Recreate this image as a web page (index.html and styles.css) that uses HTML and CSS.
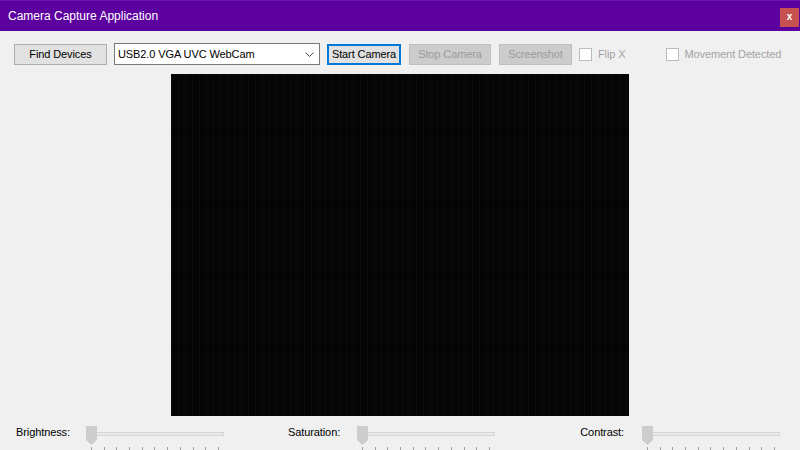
FILE: index.html
```html
<!DOCTYPE html>
<html>
<head>
<meta charset="utf-8">
<link rel="stylesheet" href="styles.css">
</head>
<body>
<div class="window">
  <div class="titlebar">
    <span class="title">Camera Capture Application</span>
    <span class="close">x</span>
  </div>
  <div class="toolbar">
    <button class="btn btn-find">Find Devices</button>
    <div class="combo">
      <span>USB2.0 VGA UVC WebCam</span>
      <svg class="chev" width="9" height="5" viewBox="0 0 9 5"><polyline points="0.5,0.5 4.5,4.5 8.5,0.5" fill="none" stroke="#444" stroke-width="1"/></svg>
    </div>
    <button class="btn btn-start">Start Camera</button>
    <button class="btn btn-dis btn-stop">Stop Camera</button>
    <button class="btn btn-dis btn-shot">Screenshot</button>
    <label class="check check-flip"><span class="box"></span>Flip X</label>
    <label class="check check-move"><span class="box"></span>Movement Detected</label>
  </div>
  <div class="video"></div>
  <div class="sliders">
    <span class="lbl lbl-b">Brightness:</span>
    <div class="slider">
      <svg class="thumb" width="11" height="19" viewBox="0 0 11 19"><polygon points="0,0 11,0 11,14 5.5,19 0,14" fill="#cdcdcd"/></svg>
      <div class="track"></div>
      <div class="ticks"><i></i><i></i><i></i><i></i><i></i><i></i><i></i><i></i><i></i><i></i><i></i></div>
    </div>
    <span class="lbl lbl-s">Saturation:</span>
    <div class="slider">
      <svg class="thumb" width="11" height="19" viewBox="0 0 11 19"><polygon points="0,0 11,0 11,14 5.5,19 0,14" fill="#cdcdcd"/></svg>
      <div class="track"></div>
      <div class="ticks"><i></i><i></i><i></i><i></i><i></i><i></i><i></i><i></i><i></i><i></i><i></i></div>
    </div>
    <span class="lbl lbl-c">Contrast:</span>
    <div class="slider">
      <svg class="thumb" width="11" height="19" viewBox="0 0 11 19"><polygon points="0,0 11,0 11,14 5.5,19 0,14" fill="#cdcdcd"/></svg>
      <div class="track"></div>
      <div class="ticks"><i></i><i></i><i></i><i></i><i></i><i></i><i></i><i></i><i></i><i></i><i></i></div>
    </div>
  </div>
</div>
</body>
</html>
```
FILE: styles.css
```css
html, body {
  margin: 0;
  padding: 0;
  width: 800px;
  height: 450px;
  overflow: hidden;
  background: #f0f0f0;
  font-family: "Liberation Sans", Arial, sans-serif;
  font-size: 11px;
  letter-spacing: -0.1px;
  color: #000;
}
.window {
  display: flex;
  flex-direction: column;
  width: 800px;
  height: 450px;
}
.titlebar {
  height: 31px;
  box-sizing: border-box;
  background: #5d00a0;
  border-top: 1px solid #6a14a8;
  display: flex;
  align-items: flex-start;
  padding-left: 8px;
  padding-right: 1px;
}
.title {
  color: #fff;
  font-size: 12px;
  letter-spacing: 0;
  line-height: 14px;
  margin-top: 8px;
}
.close {
  margin-left: auto;
  margin-top: 7px;
  width: 19px;
  height: 19px;
  background: #c75050;
  color: #fff;
  font-weight: bold;
  font-size: 10px;
  line-height: 18px;
  text-align: center;
}
.toolbar {
  display: flex;
  align-items: center;
  height: 22px;
  margin-top: 12px;
  padding-left: 14px;
}
.btn {
  box-sizing: border-box;
  height: 21px;
  margin: 0;
  padding: 0;
  font-family: "Liberation Sans", Arial, sans-serif;
  font-size: 11px;
  letter-spacing: -0.1px;
  background: #e1e1e1;
  border: 1px solid #adadad;
  color: #000;
}
.btn-find { width: 93px; }
.combo {
  box-sizing: border-box;
  width: 206px;
  height: 22px;
  margin-left: 7px;
  background: #fff;
  border: 1px solid #7a7a7a;
  display: flex;
  align-items: center;
  padding-left: 3px;
  padding-right: 5px;
}
.chev { margin-left: auto; }
.btn-start {
  width: 74px;
  margin-left: 7px;
  border: 2px solid #0078d7;
}
.btn-dis {
  background: #cccccc;
  border-color: #bfbfbf;
  color: #9b9b9b;
}
.btn-stop { width: 82px; margin-left: 8px; }
.btn-shot { width: 73px; margin-left: 8px; }
.check {
  display: flex;
  align-items: center;
  color: #a3a3a3;
}
.box {
  box-sizing: border-box;
  width: 13px;
  height: 13px;
  background: #fff;
  border: 1px solid #bcbcbc;
  margin-right: 6px;
}
.check-flip { margin-left: 7px; }
.check-move { margin-left: 40px; }
.video {
  width: 458px;
  height: 342px;
  margin-top: 9px;
  margin-left: 171px;
  background-color: #040404;
  background-image:
    repeating-linear-gradient(90deg, rgba(16,16,16,0.5) 0 1px, transparent 1px 7px),
    repeating-linear-gradient(0deg, rgba(14,14,14,0.4) 0 1px, transparent 1px 9px);
}
.sliders {
  display: flex;
  align-items: flex-start;
  margin-top: 8px;
  height: 26px;
}
.lbl {
  line-height: 16px;
  box-sizing: border-box;
}
.lbl-b { width: 86px; padding-left: 16px; }
.lbl-s { width: 129px; padding-left: 60px; }
.lbl-c { width: 143px; text-align: right; padding-right: 18px; }
.slider {
  position: relative;
  width: 142px;
  height: 26px;
}
.thumb {
  position: absolute;
  left: 0;
  top: 2px;
}
.track {
  box-sizing: border-box;
  width: 138px;
  height: 4px;
  margin-top: 8px;
  background: #e7eaea;
  border: 1px solid #d6d6d6;
}
.ticks {
  display: flex;
  justify-content: space-between;
  width: 128px;
  margin-left: 5px;
  margin-top: 11px;
  height: 4px;
}
.ticks i {
  display: block;
  width: 1px;
  height: 4px;
  background: #a0a0a0;
}
```
